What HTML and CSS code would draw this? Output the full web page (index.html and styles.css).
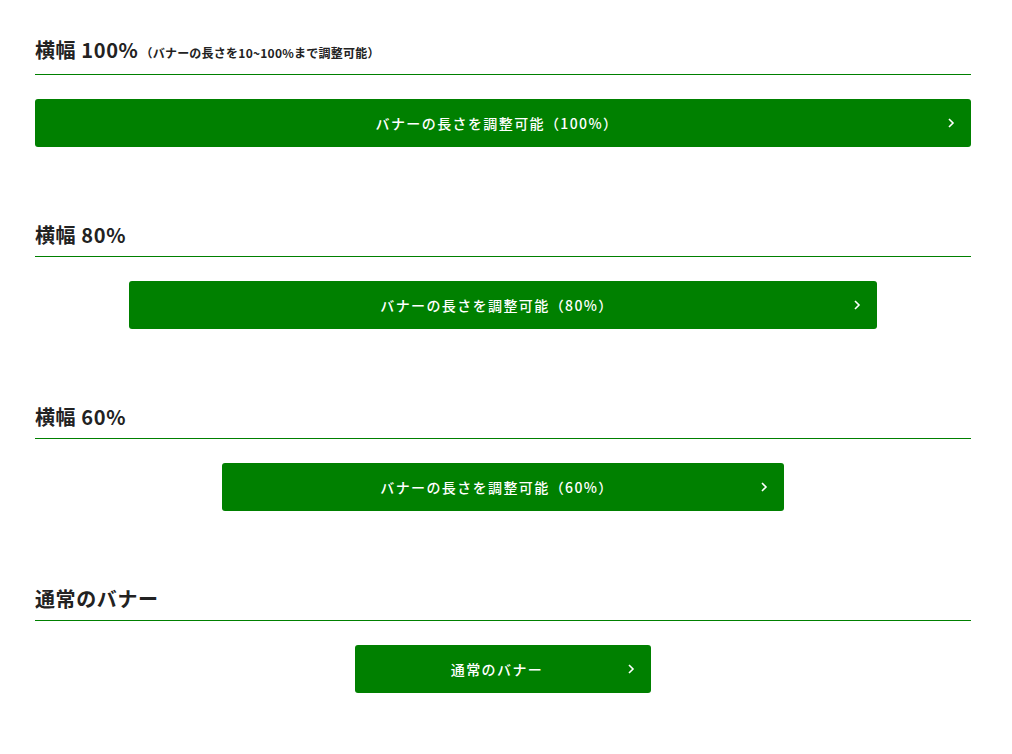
FILE: index.html
```html
<!DOCTYPE html>
<html lang="ja">
<head>
    <meta charset="UTF-8">
    <meta name="viewport" content="width=device-width, initial-scale=1.0">
    <title>バナー</title>
    <link rel="stylesheet" href="styles.css">
</head>
<body>
    <div class="container">

        <section class="banner-section">
            <h2 class="section-title">横幅 100%<span class="title-note">（バナーの長さを10~100%まで調整可能）</span></h2>
            <a class="banner-btn w-100" href="#">
                <span class="banner-label">バナーの長さを調整可能（100%）</span>
                <svg class="banner-arrow" viewBox="0 0 8 12" aria-hidden="true"><path d="M2 2l4 4-4 4"/></svg>
            </a>
        </section>

        <section class="banner-section">
            <h2 class="section-title">横幅 80%</h2>
            <a class="banner-btn w-80" href="#">
                <span class="banner-label">バナーの長さを調整可能（80%）</span>
                <svg class="banner-arrow" viewBox="0 0 8 12" aria-hidden="true"><path d="M2 2l4 4-4 4"/></svg>
            </a>
        </section>

        <section class="banner-section">
            <h2 class="section-title">横幅 60%</h2>
            <a class="banner-btn w-60" href="#">
                <span class="banner-label">バナーの長さを調整可能（60%）</span>
                <svg class="banner-arrow" viewBox="0 0 8 12" aria-hidden="true"><path d="M2 2l4 4-4 4"/></svg>
            </a>
        </section>

        <section class="banner-section">
            <h2 class="section-title">通常のバナー</h2>
            <a class="banner-btn w-normal" href="#">
                <span class="banner-label">通常のバナー</span>
                <svg class="banner-arrow" viewBox="0 0 8 12" aria-hidden="true"><path d="M2 2l4 4-4 4"/></svg>
            </a>
        </section>

    </div>
</body>
</html>
```

FILE: styles.css
```css
/* base */
body {
    margin: 0;
    font-family: "Noto Sans CJK JP", "Noto Sans", sans-serif;
    color: #222;
    background: #fff;
}

.container {
    width: 936px;
    padding: 35px 0 40px 35px;
}

.banner-section {
    margin-bottom: 73px;
}

/* headings with green underline */
.section-title {
    margin: 0 0 24px;
    padding-bottom: 6px;
    border-bottom: 1px solid #008000;
    font-size: 20px;
    font-weight: 700;
    line-height: 30px;
    letter-spacing: 0.03em;
}

.title-note {
    font-size: 12px;
    font-weight: 700;
    margin-left: 2px;
    letter-spacing: 0.02em;
}

/* green banner buttons */
.banner-btn {
    position: relative;
    display: flex;
    align-items: center;
    justify-content: center;
    height: 48px;
    margin: 0 auto;
    padding: 0 32px 0 20px;
    box-sizing: border-box;
    background-color: #008000;
    border-radius: 3px;
    color: #fff;
    font-size: 14px;
    font-weight: 500;
    letter-spacing: 0.1em;
    text-decoration: none;
}

.w-100 { width: 100%; }
.w-80 { width: 80%; }
.w-60 { width: 60%; }
.w-normal { width: 296px; }

.banner-arrow {
    position: absolute;
    right: 16px;
    top: 50%;
    width: 8px;
    height: 12px;
    margin-top: -6px;
    fill: none;
    stroke: #fff;
    stroke-width: 1.6;
}
```
